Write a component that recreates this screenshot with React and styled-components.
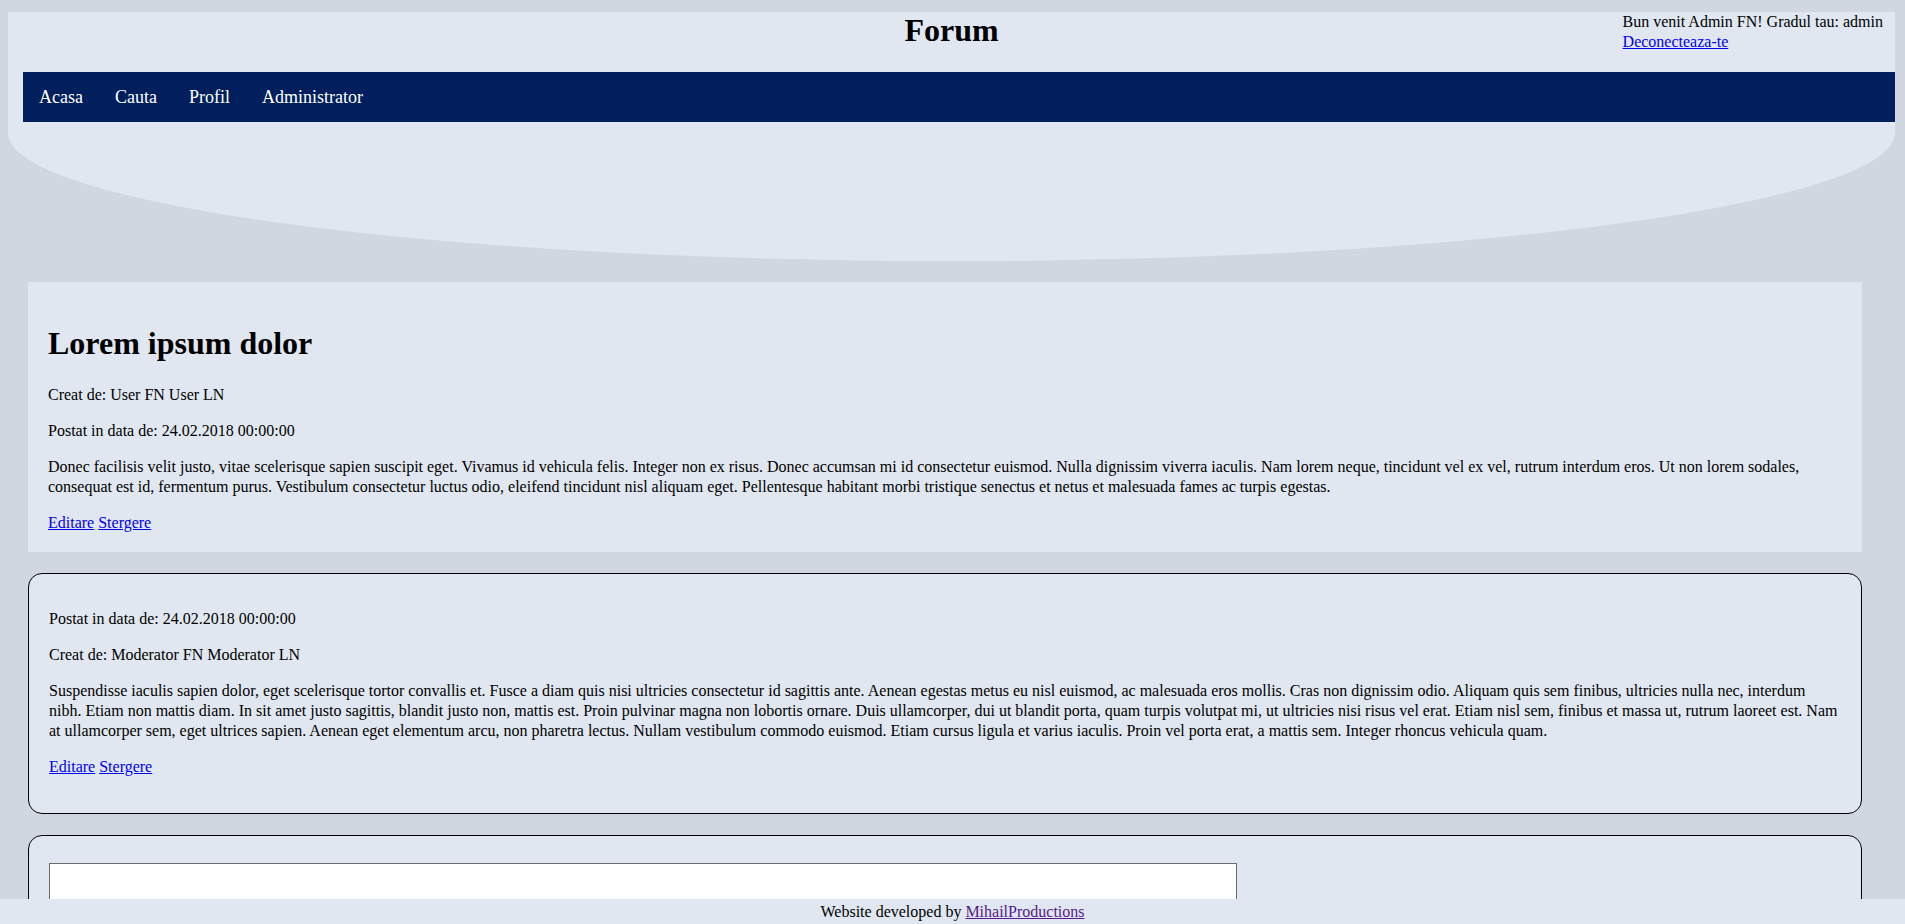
import styled, { createGlobalStyle } from "styled-components"

const GlobalStyle = createGlobalStyle`
    html, body {
        background: #d0d7e1;
    }
    body {
        margin: 8px;
        font-family: "Liberation Serif", "Times New Roman", serif;
        font-size: 16px;
        line-height: 1.25;
        color: #000;
    }
    a {
        color: #0000ee;
    }
`

const Header = styled.header`
    margin: 4px 2px 0 0;
    padding-bottom: 139px;
    background: #e0e7f0;
    border-radius: 0 0 50% 50% / 0 0 128px 128px;
`

const TopRow = styled.div`
    display: grid;
    grid-template-columns: 1fr auto 1fr;
    height: 60px;
    h1 {
        grid-column: 2;
        margin: 0;
        font-size: 32px;
        line-height: normal;
        font-weight: bold;
    }
`

const UserBox = styled.div`
    grid-column: 3;
    justify-self: end;
    margin-right: 12px;
    a {
        display: block;
    }
`

const NavBar = styled.nav`
    display: flex;
    align-items: center;
    height: 50px;
    margin-left: 15px;
    background: #001f5c;
`

const NavItem = styled.a`
    padding: 0 16px;
    color: #fff;
    font-size: 18px;
    text-decoration: none;
`

const Main = styled.main`
    display: flex;
    flex-direction: column;
    gap: 21px;
    padding: 21px 35px 60px 20px;
`

// topic card has no border, replies get the rounded outline
const Card = styled.section`
    padding: ${(props) => props.$topic ? '20px 20px 3px' : '19px 20px 20px'};
    background: #e0e7f0;
    border: ${(props) => props.$topic ? 'none' : '1px solid #000'};
    border-radius: ${(props) => props.$topic ? '0' : '14px'};
    h1 {
        margin: 21.44px 0;
        font-size: 32px;
    }
    p {
        margin: 16px 0;
    }
`

const ReplyBox = styled.textarea`
    display: block;
    width: 1188px;
    height: 120px;
    margin-top: 8px;
    padding: 2px;
    box-sizing: border-box;
    background: #fff;
    border: 1px solid #6b6b6b;
    resize: vertical;
`

const Footer = styled.footer`
    position: fixed;
    left: 0;
    right: 0;
    bottom: 0;
    height: 25px;
    display: flex;
    align-items: center;
    justify-content: center;
    background: #e0e7f0;
    font-size: 16px;
    a {
        margin-left: 4px;
        color: #551a8b;
    }
`

const Links = () => (
    <p>
        <a href="#">Editare</a> <a href="#">Stergere</a>
    </p>
)

const App = () => {
    return (
        <>
            <GlobalStyle />
            <Header>
                <TopRow>
                    <h1>Forum</h1>
                    <UserBox>
                        Bun venit Admin FN! Gradul tau: admin
                        <a href="#">Deconecteaza-te</a>
                    </UserBox>
                </TopRow>
                <NavBar>
                    <NavItem href="#">Acasa</NavItem>
                    <NavItem href="#">Cauta</NavItem>
                    <NavItem href="#">Profil</NavItem>
                    <NavItem href="#">Administrator</NavItem>
                </NavBar>
            </Header>
            <Main>
                <Card $topic>
                    <h1>Lorem ipsum dolor</h1>
                    <p>Creat de: User FN User LN</p>
                    <p>Postat in data de: 24.02.2018 00:00:00</p>
                    <p>Donec facilisis velit justo, vitae scelerisque sapien suscipit eget. Vivamus id vehicula felis. Integer non ex risus. Donec accumsan mi id consectetur euismod. Nulla dignissim viverra iaculis. Nam lorem neque, tincidunt vel ex vel, rutrum interdum eros. Ut non lorem sodales, consequat est id, fermentum purus. Vestibulum consectetur luctus odio, eleifend tincidunt nisl aliquam eget. Pellentesque habitant morbi tristique senectus et netus et malesuada fames ac turpis egestas.</p>
                    <Links />
                </Card>
                <Card>
                    <p>Postat in data de: 24.02.2018 00:00:00</p>
                    <p>Creat de: Moderator FN Moderator LN</p>
                    <p>Suspendisse iaculis sapien dolor, eget scelerisque tortor convallis et. Fusce a diam quis nisi ultricies consectetur id sagittis ante. Aenean egestas metus eu nisl euismod, ac malesuada eros mollis. Cras non dignissim odio. Aliquam quis sem finibus, ultricies nulla nec, interdum nibh. Etiam non mattis diam. In sit amet justo sagittis, blandit justo non, mattis est. Proin pulvinar magna non lobortis ornare. Duis ullamcorper, dui ut blandit porta, quam turpis volutpat mi, ut ultricies nisi risus vel erat. Etiam nisl sem, finibus et massa ut, rutrum laoreet est. Nam at ullamcorper sem, eget ultrices sapien. Aenean eget elementum arcu, non pharetra lectus. Nullam vestibulum commodo euismod. Etiam cursus ligula et varius iaculis. Proin vel porta erat, a mattis sem. Integer rhoncus vehicula quam.</p>
                    <Links />
                </Card>
                <Card>
                    <ReplyBox />
                </Card>
            </Main>
            <Footer>
                Website developed by<a href="#">MihailProductions</a>
            </Footer>
        </>
    )
}

export default App
